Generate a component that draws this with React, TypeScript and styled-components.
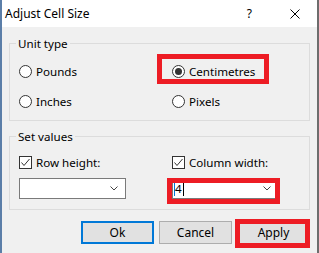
import React from "react";
import styled, { createGlobalStyle, css } from "styled-components";

const GlobalStyle = createGlobalStyle`
  html, body {
    margin: 0;
    padding: 0;
    background: #f0f0f0;
  }
  body {
    font-family: "Noto Sans", "Segoe UI", sans-serif;
    font-size: 11.6px;
    color: #000;
  }
`;

const red = "#ed1c24";

const marked = css`
  position: relative;
  &::after {
    content: "";
    position: absolute;
    box-sizing: border-box;
    border: 5px solid ${red};
    pointer-events: none;
  }
`;

const Window = styled.div`
  width: 319px;
  height: 253px;
  box-sizing: border-box;
  display: flex;
  flex-direction: column;
  background: #f0f0f0;
  border-left: 2px solid #5b7ea8;
  border-right: 2px solid #6d6d6d;
  overflow: hidden;
`;

const TitleBar = styled.div`
  height: 27px;
  flex: none;
  background: #fff;
  display: flex;
  align-items: center;
  padding: 0 17px 0 3px;
`;

const Title = styled.span`
  flex: 1;
  font-size: 12px;
`;

const Help = styled.span`
  font-size: 12px;
  margin-right: 38px;
`;

const Body = styled.div`
  flex: 1;
  display: flex;
  flex-direction: column;
  padding: 0 7px;
`;

const GroupBox = styled.div<{ $top: number }>`
  margin-top: ${p => p.$top}px;
  border: 1px solid #dcdcdc;
  padding: 0 9px ${p => (p.$top > 15 ? 11 : 10)}px;
`;

const GroupTitle = styled.div`
  display: table;
  margin: -8px 0 0 -3px;
  padding: 0 2px;
  line-height: 15px;
  background: #f0f0f0;
`;

const OptionGrid = styled.div<{ $first: number; $gap: number }>`
  display: grid;
  grid-template-columns: 153px 1fr;
  row-gap: ${p => p.$gap}px;
  margin-top: ${p => p.$first}px;
`;

const Option = styled.div<{ $mark?: boolean }>`
  display: flex;
  align-items: center;
  gap: 4px;
  height: 16px;
  justify-self: start;
  ${p =>
    p.$mark &&
    css`
      ${marked}
      &::after {
        left: -15px;
        top: -9px;
        width: 112px;
        height: 30px;
      }
    `}
`;

const Radio = styled.span<{ $checked?: boolean }>`
  width: 13px;
  height: 13px;
  box-sizing: border-box;
  border: 1px solid #333;
  border-radius: 50%;
  background: #fff;
  display: flex;
  align-items: center;
  justify-content: center;
  &::after {
    content: "";
    width: 7px;
    height: 7px;
    border-radius: 50%;
    background: ${p => (p.$checked ? "#333" : "transparent")};
  }
`;

const Check = styled.span`
  width: 13px;
  height: 13px;
  box-sizing: border-box;
  border: 1px solid #333;
  background: #fff;
  display: flex;
  align-items: center;
  justify-content: center;
`;

const Combo = styled.div<{ $mark?: boolean }>`
  width: 107px;
  height: 21px;
  box-sizing: border-box;
  border: 1px solid #7a7a7a;
  background: #fff;
  display: flex;
  align-items: center;
  justify-content: space-between;
  padding: 0 7px 0 1px;
  ${p =>
    p.$mark &&
    css`
      ${marked}
      &::after {
        left: -6px;
        top: -1px;
        width: 113px;
        height: 26px;
      }
    `}
`;

const ComboValue = styled.span`
  display: flex;
  align-items: center;
  height: 15px;
  line-height: 15px;
  border-left: 1px solid #0078d7;
  border-right: 1px solid #000;
  padding: 0 1px 0 0;
`;

const Buttons = styled.div`
  display: flex;
  justify-content: flex-end;
  gap: 5px;
  margin-top: 11px;
`;

const Button = styled.button<{ $default?: boolean; $mark?: boolean }>`
  width: 73px;
  height: 23px;
  box-sizing: border-box;
  padding: 0;
  background: #e1e1e1;
  border: ${p => (p.$default ? "2px solid #0078d7" : "1px solid #adadad")};
  font-family: inherit;
  font-size: 12px;
  color: #000;
  ${p =>
    p.$mark &&
    css`
      ${marked}
      &::after {
        left: -3px;
        top: -3px;
        width: 75px;
        height: 29px;
      }
    `}
`;

const Chevron = () => (
  <svg width="8" height="5" viewBox="0 0 8 5">
    <polyline points="0.5,0.5 4,4 7.5,0.5" fill="none" stroke="#444" strokeWidth="1" />
  </svg>
);

const CloseIcon = () => (
  <svg width="10" height="10" viewBox="0 0 10 10">
    <path d="M0.5 0.5 L9.5 9.5 M9.5 0.5 L0.5 9.5" stroke="#000" strokeWidth="1" />
  </svg>
);

const Tick = () => (
  <svg width="11" height="11" viewBox="0 0 11 11">
    <polyline points="1.5,5.5 4,8.5 9.5,2" fill="none" stroke="#333" strokeWidth="1" />
  </svg>
);

export default function App() {
  return (
    <>
      <GlobalStyle />
      <Window>
        <TitleBar>
          <Title>Adjust Cell Size</Title>
          <Help>?</Help>
          <CloseIcon />
        </TitleBar>
        <Body>
          <GroupBox $top={16}>
            <GroupTitle>Unit type</GroupTitle>
            <OptionGrid $first={12} $gap={14}>
              <Option>
                <Radio />
                Pounds
              </Option>
              <Option $mark>
                <Radio $checked />
                Centimetres
              </Option>
              <Option>
                <Radio />
                Inches
              </Option>
              <Option>
                <Radio />
                Pixels
              </Option>
            </OptionGrid>
          </GroupBox>
          <GroupBox $top={15}>
            <GroupTitle>Set values</GroupTitle>
            <OptionGrid $first={10} $gap={8}>
              <Option>
                <Check>
                  <Tick />
                </Check>
                Row height:
              </Option>
              <Option>
                <Check>
                  <Tick />
                </Check>
                Column width:
              </Option>
              <Combo>
                <span />
                <Chevron />
              </Combo>
              <Combo $mark>
                <ComboValue>4</ComboValue>
                <Chevron />
              </Combo>
            </OptionGrid>
          </GroupBox>
          <Buttons>
            <Button $default>Ok</Button>
            <Button>Cancel</Button>
            <Button $mark>Apply</Button>
          </Buttons>
        </Body>
      </Window>
    </>
  );
}
